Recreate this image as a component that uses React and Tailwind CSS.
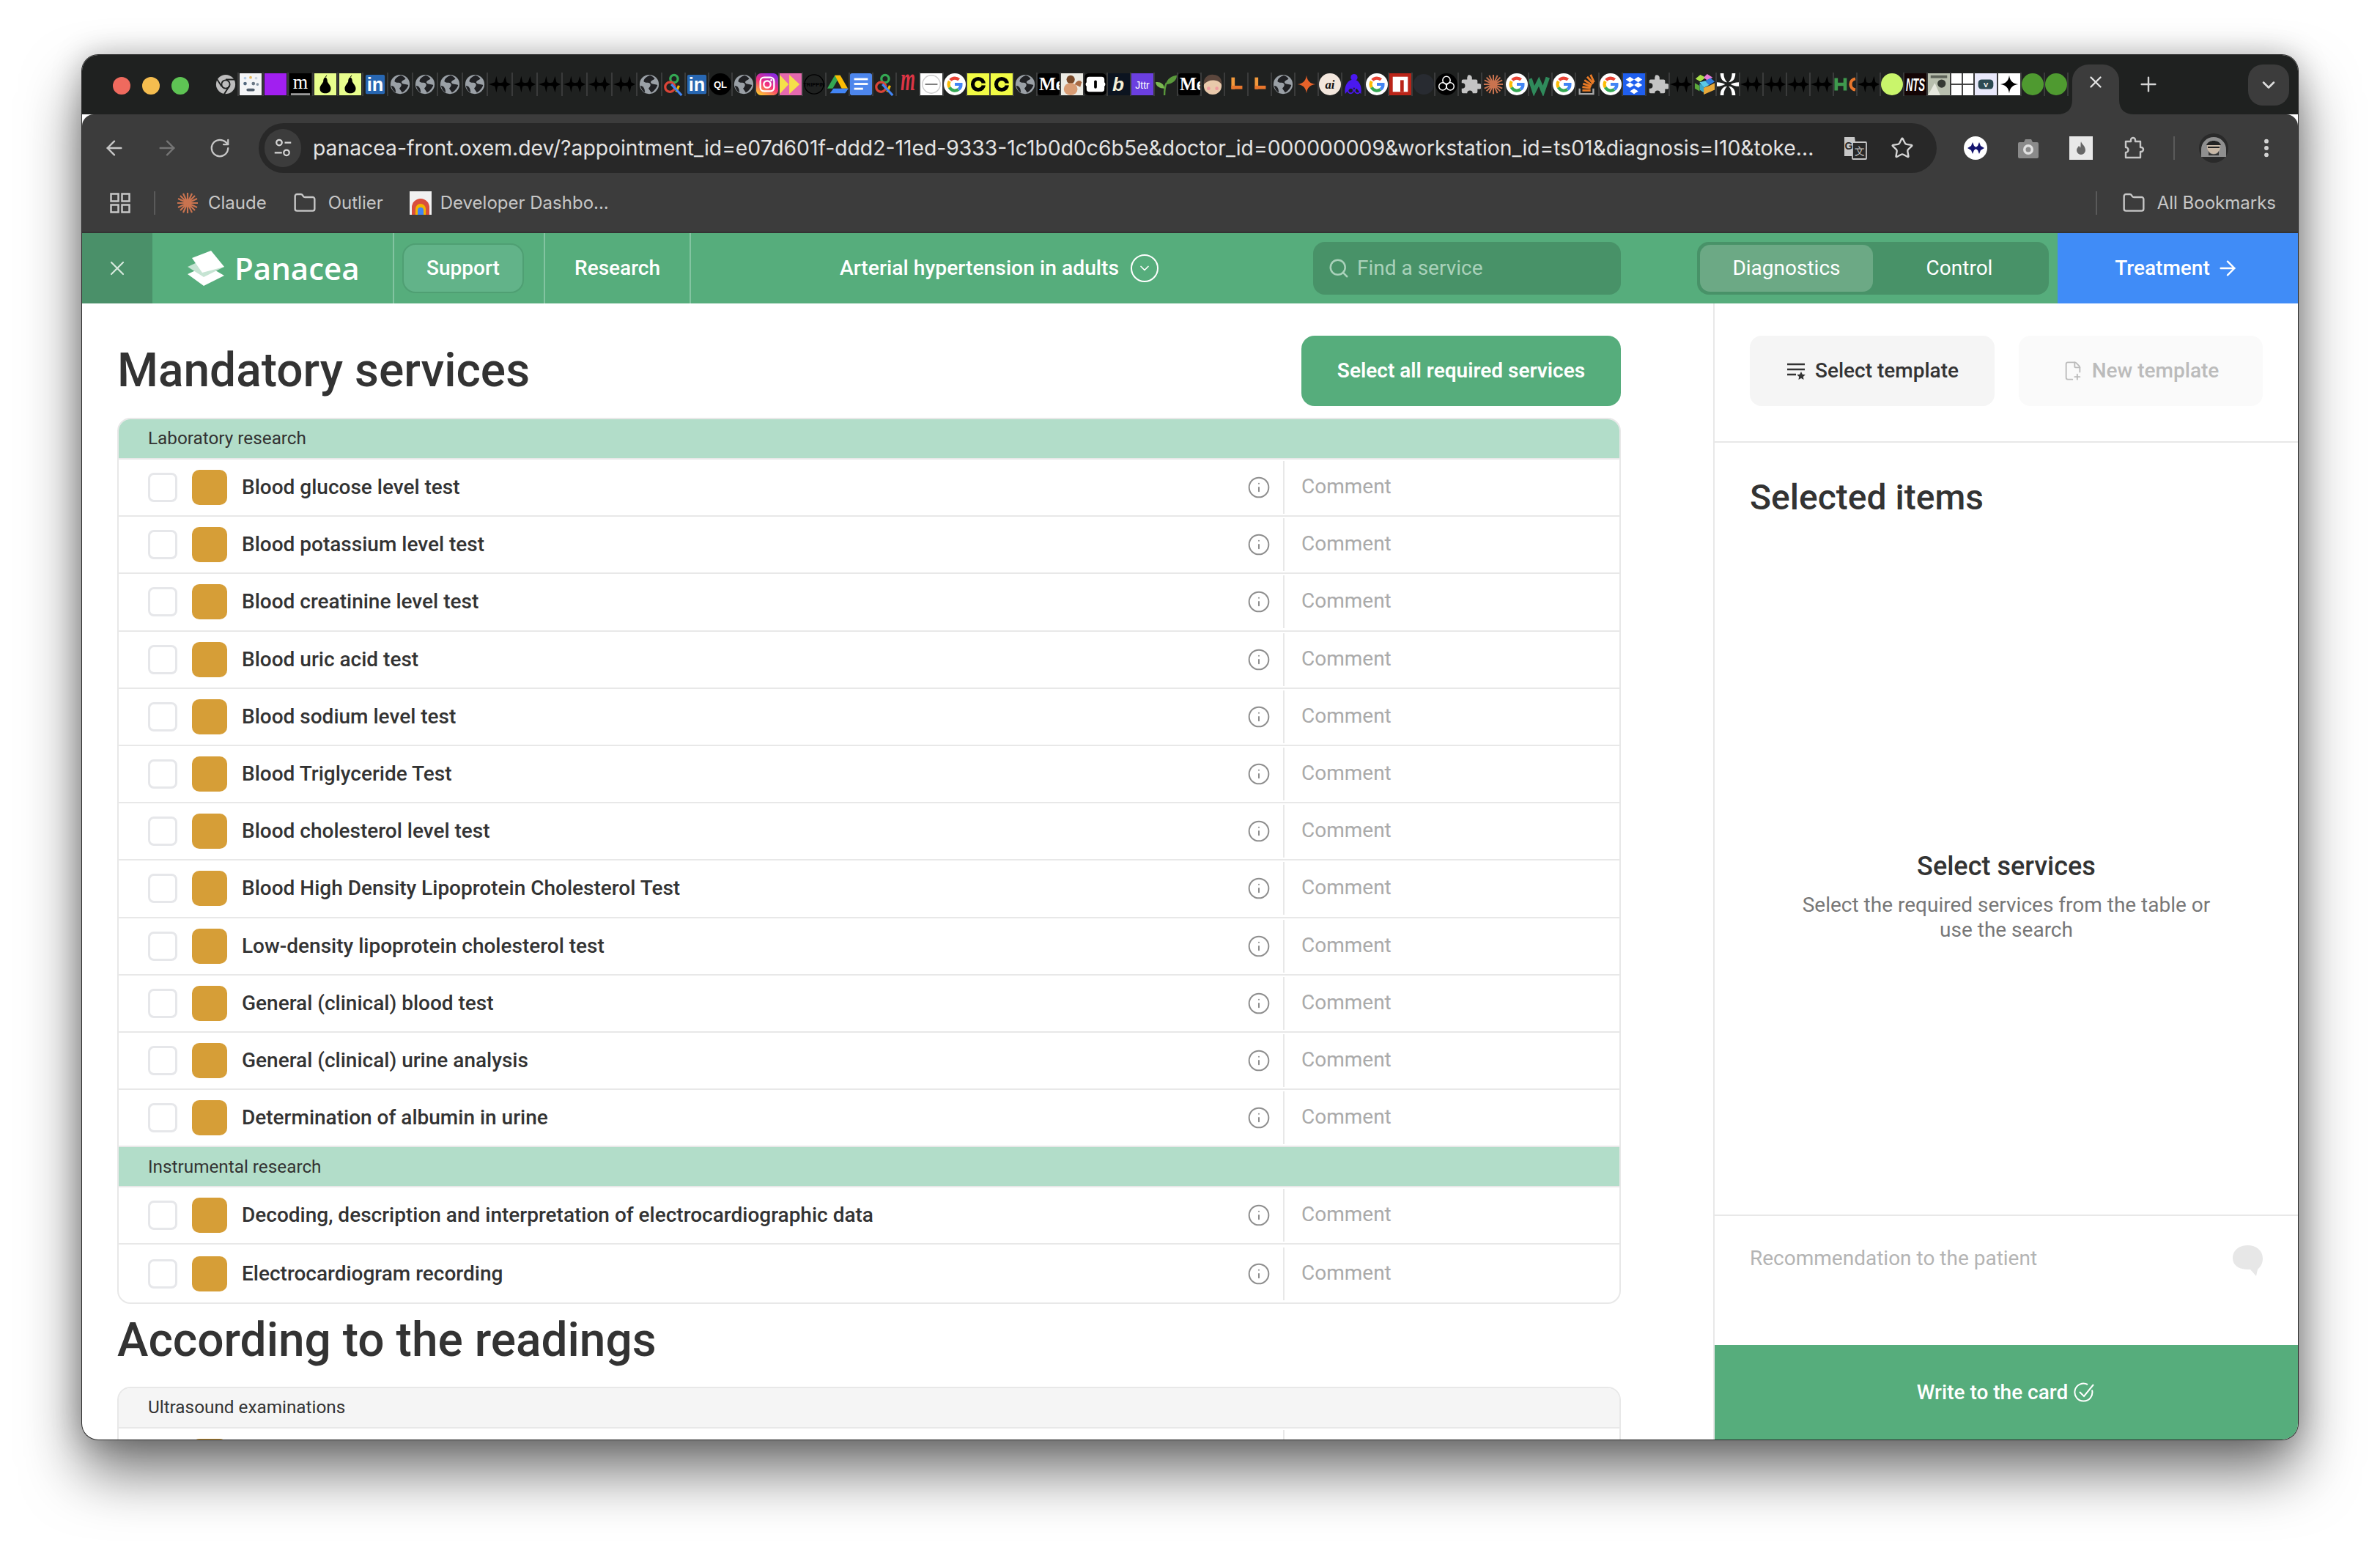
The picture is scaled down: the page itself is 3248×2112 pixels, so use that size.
import React from 'react';
import { ArrowLeft, ArrowRight, RotateCw, Star, MoreVertical, Plus, X, ChevronDown, Folder, Search, Info, FilePlus2 } from 'lucide-react';

const STAR4 = 'M16 3 C17 11 21 15 29 16 C21 17 17 21 16 29 C15 21 11 17 3 16 C11 15 15 11 16 3Z';

function GoogleG() {
  return (
    <>
      <circle cx="16" cy="16" r="16" fill="#fff" />
      <path d="M16 7a9 9 0 0 1 6 2.3" stroke="#ea4335" strokeWidth="4.5" fill="none" />
      <path d="M9.5 10a9 9 0 0 1 6.5-3" stroke="#ea4335" strokeWidth="4.5" fill="none" />
      <path d="M8.3 11.5a9 9 0 0 0 0 9" stroke="#fbbc05" strokeWidth="4.5" fill="none" />
      <path d="M8.3 20.5a9 9 0 0 0 13 3" stroke="#34a853" strokeWidth="4.5" fill="none" />
      <path d="M16 16h9a9 9 0 0 1-3.500 7.500" stroke="#4285f4" strokeWidth="4.5" fill="none" />
    </>
  );
}

function Globe() {
  return (
    <>
      <circle cx="16" cy="16" r="14" fill="#9aa0a6" />
      <path d="M17 3c-5 2-9 5-9 9 3 3 7 0 9 3 2 2 0 5-2 7l4 6c4-2 8-7 9-11-4-2-8 0-10-4 1-3 4-3 6-5-2-3-4-4-7-5Z" fill="#202124" />
      <path d="M3 18c3 0 5 2 6 5l1 5c-4-2-6-6-7-10Z" fill="#202124" />
    </>
  );
}

function Spiky() {
  return (
    <>
      <path d="M0 16 L9 13 L11 4 L13 13 L22 16 L13 19 L11 28 L9 19Z" fill="#000" />
      <path d="M10 16 L21 13 L24 4 L26 13 L32 16 L26 19 L24 28 L21 19Z" fill="#000" />
    </>
  );
}

function Rect({ fill }) {
  return <rect width="32" height="32" fill={fill} />;
}

const FAVS = {
  chrome: (
    <>
      <circle cx="16" cy="16" r="14" fill="#bdbdbd" />
      <circle cx="16" cy="16" r="7" fill="#1f2120" />
      <circle cx="16" cy="16" r="5" fill="#bdbdbd" />
      <path d="M16 9h13M10 19L3 8M21 19l-7 11" stroke="#1f2120" strokeWidth="2" />
    </>
  ),
  dots: (
    <>
      <Rect fill="#f4f5f7" />
      <circle cx="8" cy="7" r="2" fill="#b6cde6" />
      <circle cx="16" cy="6" r="2" fill="#e6b85c" />
      <circle cx="24" cy="7" r="2" fill="#c9d4e0" />
      <circle cx="8" cy="15" r="2.5" fill="#556a80" />
      <circle cx="20" cy="15" r="2.500" fill="#6a7784" />
      <circle cx="26" cy="16" r="2" fill="#8594a3" />
      <rect x="10" y="22" width="12" height="4" rx="2" fill="#4f5d6b" />
    </>
  ),
  purple: <Rect fill="#a11ff0" />,
  m: (
    <>
      <Rect fill="#000" />
      <text x="16" y="22" fontSize="28" fontFamily="Liberation Serif" fill="#fff" textAnchor="middle">m</text>
      <rect x="2" y="29" width="28" height="3" fill="#999" />
    </>
  ),
  pear: (
    <>
      <Rect fill="#e8fe8d" />
      <path d="M16 6c2 0 3 3 3 6 1 3 5 6 5 10 0 5-4 7-8 7s-8-2-8-7c0-4 4-7 5-10 0-3 1-6 3-6Z" fill="#000" />
      <path d="M16 6l2-3" stroke="#000" strokeWidth="1" />
    </>
  ),
  in: (
    <>
      <rect x="2" y="2" width="28" height="28" rx="2" fill="#2867b2" />
      <text x="16" y="26" fontSize="27" fontWeight="700" fontFamily="Liberation Sans" fill="#fff" textAnchor="middle">in</text>
    </>
  ),
  globe: <Globe />,
  x: <Spiky />,
  q: (
    <>
      <circle cx="17" cy="8" r="5.500" fill="none" stroke="#34a853" strokeWidth="3.500" />
      <circle cx="11" cy="20" r="7" fill="none" stroke="#db4437" strokeWidth="3.500" />
      <path d="M24 18l-4 9" stroke="#f4b400" strokeWidth="3.500" />
      <path d="M13 16l15 16" stroke="#4285f4" strokeWidth="3.500" />
    </>
  ),
  ql: (
    <>
      <circle cx="16" cy="16" r="16" fill="#000" />
      <text x="16" y="21" fontSize="14" fontWeight="700" fontFamily="Liberation Sans" fill="#fff" textAnchor="middle">QL</text>
    </>
  ),
  insta: (
    <>
      <defs>
        <linearGradient id="ig" x1="0.200" y1="1" x2="0.700" y2="0">
          <stop offset="0" stopColor="#fdc830" />
          <stop offset="0.5" stopColor="#f5307a" />
          <stop offset="1" stopColor="#8a2be2" />
        </linearGradient>
      </defs>
      <rect width="32" height="32" rx="7" fill="url(#ig)" />
      <rect x="6" y="6" width="20" height="20" rx="5.500" fill="none" stroke="#fff" strokeWidth="2.500" />
      <circle cx="16" cy="16" r="5" fill="none" stroke="#fff" strokeWidth="2.500" />
      <circle cx="22" cy="10" r="1.500" fill="#fff" />
    </>
  ),
  chev: (
    <>
      <Rect fill="#e569ae" />
      <path d="M0 2 L13 16 L0 30Z" fill="#f5e04a" />
      <path d="M14 2 L29 16 L14 30Z" fill="#f5e04a" />
    </>
  ),
  trip: (
    <>
      <circle cx="16" cy="16" r="14" fill="none" stroke="#000" strokeWidth="1.500" />
      <text x="16" y="19" fontSize="8" fontWeight="700" fontFamily="Liberation Sans" fill="#000" textAnchor="middle">TRIPPIN</text>
    </>
  ),
  drive: (
    <>
      <path d="M12 3h8L9 22H1Z" fill="#34a853" />
      <path d="M12 3h8l11 19h-9Z" fill="#fbbc05" />
      <path d="M5 29l5-7h22l-5 7Z" fill="#4285f4" />
    </>
  ),
  docs: (
    <>
      <rect width="32" height="32" rx="3" fill="#4d86ec" />
      <rect x="6" y="7" width="20" height="3" fill="#fff" />
      <rect x="6" y="14" width="20" height="3" fill="#fff" />
      <rect x="6" y="21" width="13" height="3" fill="#fff" />
    </>
  ),
  mred: <text x="29" y="25" transform="scale(0.55 1)" fontSize="50" fontWeight="700" fontStyle="italic" fontFamily="Liberation Serif" fill="#dc3545" textAnchor="middle">m</text>,
  circ: (
    <>
      <Rect fill="#fff" />
      <circle cx="16" cy="16" r="13" fill="none" stroke="#ccc" strokeWidth="1.500" />
      <rect x="7" y="15" width="18" height="2" fill="#777" />
    </>
  ),
  g: <GoogleG />,
  c: (
    <>
      <Rect fill="#f1fb45" />
      <circle cx="16" cy="16" r="8" fill="none" stroke="#000" strokeWidth="5.500" />
      <rect x="21" y="14.500" width="7" height="3" fill="#f1fb45" />
    </>
  ),
  me: (
    <>
      <rect width="32" height="32" rx="4" fill="#000" />
      <text x="2" y="25" fontSize="26" fontWeight="700" fontFamily="Liberation Serif" fill="#fff">Me</text>
    </>
  ),
  muscle: (
    <>
      <Rect fill="#ecebe4" />
      <circle cx="14" cy="9" r="6" fill="#7a4a2a" />
      <ellipse cx="14" cy="23" rx="10" ry="9" fill="#d89c74" />
      <path d="M20 16c3-6 8-7 10-3l-2 7Z" fill="#a86a44" />
    </>
  ),
  blob: (
    <>
      <rect width="32" height="32" rx="6" fill="#000" />
      <path d="M7 5h18a4 4 0 0 1 4 4v4a4 4 0 0 1 0 6v4a4 4 0 0 1-4 4H7a4 4 0 0 1-4-4v-4a4 4 0 0 1 0-6V9a4 4 0 0 1 4-4Z" fill="#fff" />
      <rect x="14" y="10" width="4" height="12" rx="2" fill="#000" />
    </>
  ),
  b: (
    <>
      <Rect fill="#0c1420" />
      <text x="15" y="26" fontSize="28" fontWeight="700" fontStyle="italic" fontFamily="Liberation Sans" fill="#f6f1d8" textAnchor="middle">b</text>
    </>
  ),
  jttr: (
    <>
      <Rect fill="#6b3fe0" />
      <text x="16" y="22" fontSize="15" fontFamily="Liberation Sans" fill="#fff" textAnchor="middle">Jttr</text>
    </>
  ),
  sprout: (
    <>
      <path d="M14 32c0-8 1-14 3-18" stroke="#5a9a3c" strokeWidth="2.500" fill="none" />
      <path d="M16 16C18 8 24 4 32 3c0 7-6 13-16 13Z" fill="#5a9a3c" />
      <path d="M14 22C13 15 8 12 1 13c1 6 6 9 13 9Z" fill="#7ab850" />
    </>
  ),
  face: (
    <>
      <circle cx="16" cy="18" r="13" fill="#e9c9ab" />
      <path d="M3 16C2 6 10 1 17 2c8 0 13 6 12 14-4-5-8-6-13-6-5 0-9 2-13 6Z" fill="#5b463c" />
      <circle cx="10" cy="22" r="2.500" fill="#ef9aa0" />
      <circle cx="22" cy="22" r="2.500" fill="#ef9aa0" />
    </>
  ),
  l: (
    <>
      <rect x="9" y="6" width="5" height="17" fill="#f39a3c" />
      <rect x="9" y="18" width="16" height="5" fill="#e8762c" />
    </>
  ),
  star: <path d={STAR4} fill="#e8622a" />,
  ai: (
    <>
      <circle cx="16" cy="16" r="16" fill="#f3e7dd" />
      <text x="16" y="22" fontSize="18" fontWeight="700" fontStyle="italic" fontFamily="Liberation Serif" fill="#111" textAnchor="middle">ai</text>
    </>
  ),
  hood: (
    <>
      <circle cx="17" cy="6" r="5" fill="#4a18f0" />
      <path d="M4 30C2 18 8 9 16 9c8 0 13 9 11 21-6-7-5-9-11-9-5 0-7 3-12 9Z" fill="#4a18f0" />
      <circle cx="12" cy="25" r="4" fill="none" stroke="#4a18f0" strokeWidth="2" />
      <circle cx="22" cy="25" r="4" fill="none" stroke="#4a18f0" strokeWidth="2" />
    </>
  ),
  npm: (
    <>
      <Rect fill="#ba2418" />
      <rect x="5" y="5" width="22" height="22" fill="#fff" />
      <rect x="16" y="10" width="5" height="17" fill="#ba2418" />
    </>
  ),
  gh: <circle cx="16" cy="16" r="15" fill="#282b31" />,
  openai: (
    <>
      <circle cx="16" cy="16" r="16" fill="#000" />
      <circle cx="16" cy="10" r="5.500" fill="none" stroke="#fff" strokeWidth="1.600" />
      <circle cx="10.500" cy="19" r="5.500" fill="none" stroke="#fff" strokeWidth="1.600" />
      <circle cx="21.500" cy="19" r="5.500" fill="none" stroke="#fff" strokeWidth="1.600" />
    </>
  ),
  puzzle: <path d="M13 3a4 4 0 0 1 6 3l0 3h6a2 2 0 0 1 2 2v4h2a4 4 0 0 1 0 8h-2v4a2 2 0 0 1-2 2h-5a4 4 0 0 0-8 0H6a2 2 0 0 1-2-2v-5h1a4 4 0 0 0 0-8H4v-3a2 2 0 0 1 2-2h6V6Z" fill="#c4c4c4" />,
  claude: <path d="M16 2v28M2 16h28M6 6l20 20M26 6L6 26M10 3l12 26M22 3L10 29M3 10l26 12M29 10L3 22" stroke="#c9734f" strokeWidth="2.200" />,
  w: <path d="M1 8l6 18 7-14 6 14 7-20" fill="none" stroke="#2f8a5b" strokeWidth="6" />,
  so: (
    <>
      <path d="M5 22v8h20v-8" fill="none" stroke="#a8a8a8" strokeWidth="2.500" />
      <path d="M9 25h12M9 20l12 1.500M10 15l12 4M12 10l11 7M16 5l9 10M21 2l5 11" stroke="#e97b26" strokeWidth="3" />
    </>
  ),
  dropbox: (
    <>
      <Rect fill="#1f5fee" />
      <path d="M10 5l6 4-6 4-6-4ZM22 5l6 4-6 4-6-4ZM10 13l6 4-6 4-6-4ZM22 13l6 4-6 4-6-4ZM16 22l6 4-6 4-6-4Z" fill="#fff" />
    </>
  ),
  cube: (
    <>
      <path d="M10 2l8 4-8 6-7-4Z" fill="#a8e04a" />
      <path d="M20 1l8 5-8 4-5-4Z" fill="#e87bd8" />
      <path d="M17 11l8-4 6 5-8 5Z" fill="#2f7fe0" />
      <path d="M9 13l8-2 6 6-8 4Z" fill="#5cc9e8" />
      <path d="M9 15v9l6 4v-9Z" fill="#3fa8c8" />
      <path d="M15 21l8-3 8-4v10l-16 7Z" fill="#e8a93a" />
      <path d="M2 14l7 4v8l-7-4Z" fill="#5aa83a" />
    </>
  ),
  spikes: (
    <>
      <Rect fill="#1f2120" />
      <path d="M5 0h5c0 6 2 10 5 13-6 0-10-5-10-13ZM27 0h-5c0 6-2 10-5 13 6 0 10-5 10-13ZM5 32h5c0-6 2-10 5-13-6 0-10 5-10 13ZM27 32h-5c0-6-2-10-5-13 6 0 10 5 10 13ZM0 13c5 0 8 1 12 3-4 2-7 3-12 3ZM32 13c-5 0-8 1-12 3 4 2 7 3 12 3Z" fill="#fff" />
    </>
  ),
  hc: (
    <>
      <path d="M3 7v18M16 7v18M3 16h13" stroke="#3f9a4e" strokeWidth="5" />
      <path d="M31 8a8 8 0 0 0-7 8 8 8 0 0 0 7 8" fill="none" stroke="#e8762c" strokeWidth="4.500" />
    </>
  ),
  lime: <circle cx="16" cy="16" r="16" fill="#c9f56b" />,
  nts: (
    <>
      <Rect fill="#140505" />
      <text x="16" y="26" fontSize="26" fontStyle="italic" fontWeight="700" fontFamily="Liberation Sans" fill="#fff" textAnchor="middle" textLength="28" lengthAdjust="spacingAndGlyphs">NTS</text>
    </>
  ),
  pic: (
    <>
      <Rect fill="#b8bfae" />
      <rect x="4" y="3" width="24" height="4" fill="#5d6358" />
      <circle cx="20" cy="15" r="6" fill="#353a34" />
      <path d="M0 32L10 14l8 18Z" fill="#e6e8de" />
    </>
  ),
  grid: (
    <>
      <Rect fill="#fff" />
      <rect x="15" width="2" height="32" fill="#3a3a3a" />
      <rect y="15" width="32" height="2" fill="#3a3a3a" />
    </>
  ),
  v: (
    <>
      <Rect fill="#e9e9fb" />
      <rect x="5" y="9" width="22" height="14" rx="5" fill="#2c4a52" />
      <text x="16" y="20" fontSize="10" fontWeight="700" fontFamily="Liberation Sans" fill="#fff" textAnchor="middle">V</text>
    </>
  ),
  wstar: (
    <>
      <Rect fill="#fff" />
      <path d={STAR4} fill="#000" />
    </>
  ),
  green: <circle cx="16" cy="16" r="16" fill="#4f9a30" />,
};

const WIDE_TABS = ['chrome', 'dots', 'purple', 'm', 'pear', 'pear', 'in', 'globe', 'globe', 'globe', 'globe', 'x', 'x', 'x', 'x', 'x', 'x', 'globe'];
const NARROW_TABS = [
  'q', 'in', 'ql', 'globe', 'insta', 'chev', 'trip', 'drive', 'docs', 'q', 'mred', 'circ', 'g', 'c', 'c', 'globe', 'me', 'muscle', 'blob', 'b',
  'jttr', 'sprout', 'me', 'face', 'l', 'l', 'globe', 'star', 'ai', 'hood', 'g', 'npm', 'gh', 'openai', 'puzzle', 'claude', 'g', 'w', 'g', 'so',
  'g', 'dropbox', 'puzzle', 'x', 'cube', 'spikes', 'x', 'x', 'x', 'x', 'hc', 'x', 'lime', 'nts', 'pic', 'grid', 'v', 'wstar', 'green', 'green',
];

function Fav({ name, className }) {
  return (
    <div className={`flex h-8 items-center justify-center overflow-hidden border-r-[2px] border-[#3a3b3b] ${className}`}>
      <svg className="h-8 w-[30px] shrink-0" viewBox="0 0 32 32">{FAVS[name]}</svg>
    </div>
  );
}

function TabStrip() {
  return (
    <div className="flex h-[81px] bg-[#1f2120]">
      <div className="mt-[30px] flex h-6 w-[180px] gap-4 pl-[42px]">
        <span className="h-6 w-6 shrink-0 rounded-full bg-[#ef6a5e]" />
        <span className="h-6 w-6 shrink-0 rounded-full bg-[#f5bd4f]" />
        <span className="h-6 w-6 shrink-0 rounded-full bg-[#5ec454]" />
      </div>
      <div className="mt-6 flex h-8 w-[2531px] items-center">
        {WIDE_TABS.map((name, i) => (
          <Fav key={i} name={name} className="w-[34px] shrink-0" />
        ))}
        {NARROW_TABS.map((name, i) => (
          <Fav key={i} name={name} className="min-w-0 flex-1" />
        ))}
      </div>
      {/* Active tab with the little flares at its foot */}
      <div className="relative ml-[5px] mt-[13px] flex h-[68px] w-16 justify-center rounded-t-[22px] bg-[#3c3c3c] pt-[11px]">
        <X className="h-[26px] w-[26px] text-[#e3e3e3]" strokeWidth={2.2} />
        <svg className="absolute bottom-0 right-full h-5 w-5" viewBox="0 0 20 20"><path d="M20 0v20H0c12 0 20-6 20-20Z" fill="#3c3c3c" /></svg>
        <svg className="absolute bottom-0 left-full h-5 w-5" viewBox="0 0 20 20"><path d="M0 0v20h20C8 20 0 14 0 0Z" fill="#3c3c3c" /></svg>
      </div>
      <div className="ml-6 mt-[24px] flex h-8 w-8 items-center justify-center">
        <Plus className="h-8 w-8 text-[#d5d5d5]" strokeWidth={1.8} />
      </div>
      <div className="ml-[120px] mt-[13px] flex h-14 w-14 items-center justify-center rounded-[20px] bg-[#3c3c3c]">
        <ChevronDown className="h-7 w-7 text-[#dcdcdc]" strokeWidth={2.2} />
      </div>
    </div>
  );
}

function ToolCell({ children }) {
  return <div className="flex h-[68px] w-[72px] shrink-0 items-center justify-center">{children}</div>;
}

function Toolbar() {
  return (
    <div className="flex h-[82px] rounded-t-[16px] bg-[#3c3c3c] pl-2 pt-3">
      <ToolCell><ArrowLeft className="h-8 w-8 text-[#c7c7c7]" strokeWidth={1.8} /></ToolCell>
      <ToolCell><ArrowRight className="h-8 w-8 text-[#757575]" strokeWidth={1.8} /></ToolCell>
      <ToolCell><RotateCw className="h-[30px] w-[30px] text-[#c7c7c7]" strokeWidth={1.8} /></ToolCell>
      <div className="ml-[17px] flex h-[68px] w-[2290px] items-center rounded-full bg-[#282828] pl-2 pr-[15px]">
        <div className="flex h-[52px] w-[50px] shrink-0 items-center justify-center rounded-full bg-[#3c3c3c]">
          <svg className="h-[30px] w-[30px] text-[#d5d5d5]" viewBox="0 0 24 24" fill="none" stroke="currentColor" strokeWidth="1.800">
            <circle cx="8" cy="6" r="3" />
            <path d="M14 6h7M3 17h8" />
            <circle cx="16" cy="17" r="3" />
          </svg>
        </div>
        <span className="ml-4 min-w-0 flex-1 whitespace-nowrap font-['Inter',sans-serif] text-[28.3px] text-[#e3e3e3]">
          panacea-front.oxem.dev/?appointment_id=e07d601f-ddd2-11ed-9333-1c1b0d0c6b5e&amp;doctor_id=000000009&amp;workstation_id=ts01&amp;diagnosis=I10&amp;toke...
        </span>
        <div className="flex w-16 shrink-0 justify-center">
          <svg className="h-9 w-9" viewBox="0 0 36 36">
            <path d="M3 3h14l4 26H3Z" fill="#c7c7c7" />
            <rect x="14" y="10" width="19" height="23" rx="1" fill="#282828" stroke="#c7c7c7" strokeWidth="1.800" />
            <text x="9" y="20" fontSize="14" fontWeight="700" fontFamily="Liberation Sans" fill="#282828" textAnchor="middle">G</text>
            <text x="24" y="27" fontSize="14" fontFamily="Liberation Sans" fill="#c7c7c7" textAnchor="middle">文</text>
          </svg>
        </div>
        <div className="flex w-16 shrink-0 justify-center">
          <Star className="h-8 w-8 text-[#d5d5d5]" strokeWidth={1.8} />
        </div>
      </div>
      <div className="ml-[17px] flex">
        <ToolCell>
          <svg className="h-8 w-8" viewBox="0 0 32 32">
            <circle cx="16" cy="16" r="16" fill="#fff" />
            <path d="M5 16l5-3 2-5 2 5 4 3-4 3-2 5-2-5ZM15 16l4-3 2-5 2 5 5 3-5 3-2 5-2-5Z" fill="#14146e" />
          </svg>
        </ToolCell>
        <ToolCell>
          <svg className="h-8 w-8" viewBox="0 0 32 32">
            <path d="M4 8h6l2-4h8l2 4h6a2 2 0 0 1 2 2v18a2 2 0 0 1-2 2H4a2 2 0 0 1-2-2V10a2 2 0 0 1 2-2Z" fill="#8a8a8a" />
            <circle cx="16" cy="18" r="7" fill="#e0e0e0" />
            <circle cx="16" cy="18" r="3.500" fill="#8a8a8a" />
          </svg>
        </ToolCell>
        <ToolCell>
          <div className="flex h-8 w-8 items-center justify-center bg-[#e8e8e8]">
            <svg className="h-5 w-5" viewBox="0 0 20 20"><path d="M10 1c1 4 6 6 6 12a6 6 0 0 1-12 0c0-3 2-4 3-6 1 1 2 2 2 3 1-3 0-6 1-9Z" fill="#666" /></svg>
          </div>
        </ToolCell>
        <ToolCell>
          <svg className="h-8 w-8" viewBox="0 0 32 32" fill="none" stroke="#c7c7c7" strokeWidth="2.400" strokeLinejoin="round">
            <path d="M5 7h7V5a3 3 0 0 1 6 0v2h7v8h1a3 3 0 0 1 0 6h-1v8H5v-7a3 3 0 0 0 0-7Z" />
          </svg>
        </ToolCell>
      </div>
      <div className="ml-[18px] mt-[18px] h-8 w-[2px] bg-[#5a5a5a]" />
      <div className="ml-[17px]">
        <ToolCell>
          <svg className="h-[40px] w-[40px]" viewBox="0 0 40 40">
            <circle cx="20" cy="20" r="20" fill="#2a2a2a" />
            <path d="M3 22a17 17 0 0 1 34 0v10H3Z" fill="#8f8f8f" />
            <circle cx="20" cy="19" r="9" fill="#c9b8a6" />
            <path d="M10 16c3-8 17-8 20 0Z" fill="#222" />
            <path d="M12 19h16" stroke="#222" strokeWidth="2" />
            <path d="M13 24c2 6 12 6 14 0v6H13Z" fill="#333" />
          </svg>
        </ToolCell>
      </div>
      <ToolCell><MoreVertical className="h-8 w-8 text-[#d5d5d5]" strokeWidth={2.4} /></ToolCell>
    </div>
  );
}

function Bookmarks() {
  return (
    <div className="flex h-[80px] items-center border-b-2 border-[#333] bg-[#3c3c3c] font-['Inter',sans-serif] text-[24px] text-[#c7c7c7]">
      <svg className="ml-[38px] h-7 w-7 shrink-0" viewBox="0 0 28 28" fill="none" stroke="#c7c7c7" strokeWidth="2.500">
        <rect x="1.500" y="1.500" width="10" height="10" />
        <rect x="16.500" y="1.500" width="10" height="10" />
        <rect x="1.500" y="16.500" width="10" height="10" />
        <rect x="16.500" y="16.500" width="10" height="10" />
      </svg>
      <span className="ml-[32px] h-8 w-[2px] bg-[#5a5a5a]" />
      <svg className="ml-[28px] h-8 w-8 shrink-0" viewBox="0 0 32 32">{FAVS.claude}</svg>
      <span className="ml-3">Claude</span>
      <Folder className="ml-[36px] h-8 w-8 text-[#c7c7c7]" strokeWidth={1.8} />
      <span className="ml-4">Outlier</span>
      <svg className="ml-9 h-8 w-[30px] shrink-0" viewBox="0 0 30 32">
        <rect width="30" height="32" fill="#f1f1f1" />
        <path d="M3 32V22a12 12 0 0 1 24 0v10Z" fill="#d94f3d" />
        <path d="M8 32V24a7 7 0 0 1 14 0v8Z" fill="#f4b400" />
        <path d="M11 32v-6a4 4 0 0 1 8 0v6Z" fill="#4285f4" />
      </svg>
      <span className="ml-3 flex-1">Developer Dashbo...</span>
      <span className="h-8 w-[2px] bg-[#5a5a5a]" />
      <Folder className="ml-[34px] h-8 w-8 text-[#c7c7c7]" strokeWidth={1.8} />
      <span className="ml-4 mr-[30px]">All Bookmarks</span>
    </div>
  );
}

function AppHeader() {
  return (
    <div className="flex h-24 bg-[#56ad7c] text-[28px] font-medium text-white">
      <div className="flex w-24 items-center justify-center bg-[#4a9069]">
        <X className="h-8 w-8 text-[#d7e9de]" strokeWidth={1.6} />
      </div>
      <div className="flex w-[330px] items-center gap-[12px] border-r-2 border-[#83c4a1] pl-[46px]">
        <svg className="h-[52px] w-[54px] shrink-0" viewBox="0 0 54 52">
          <path d="M2 34l26-12 24 14-28 14Z" fill="#fff" />
          <path d="M2 24l26-12 24 12-28 14Z" fill="#c6e4d3" />
          <path d="M8 12L34 2l18 22-30 8Z" fill="#fff" />
        </svg>
        <span className="font-['Open_Sans',sans-serif] text-[42px] font-semibold leading-none">Panacea</span>
      </div>
      <div className="flex w-[206px] items-center border-r-2 border-[#83c4a1] pl-[11px]">
        <div className="flex h-[68px] w-[166px] items-center justify-center rounded-[18px] border-2 border-[#4f9f73] bg-[#62b389]">Support</div>
      </div>
      <div className="flex w-[199px] items-center justify-center border-r-2 border-[#83c4a1]">Research</div>
      <div className="flex w-[849px] items-center justify-center gap-4 pr-2">
        <span className="text-[28.3px]">Arterial hypertension in adults</span>
        <span className="flex h-[38px] w-[38px] items-center justify-center rounded-full border-2 border-white">
          <ChevronDown className="h-5 w-5" strokeWidth={2} />
        </span>
      </div>
      <div className="mt-3 flex h-[72px] w-[420px] items-center rounded-[16px] bg-[#489268] pl-[20px] font-normal text-[#a9d1ba]">
        <Search className="h-[30px] w-[30px]" strokeWidth={2} />
        <span className="ml-[10px]">Find a service</span>
      </div>
      <div className="ml-[104px] mt-3 flex h-[72px] w-[480px] items-center rounded-[16px] bg-[#489268] px-1 font-normal">
        <div className="flex h-16 w-[236px] items-center justify-center rounded-[14px] bg-[#6ca985]">Diagnostics</div>
        <div className="flex flex-1 items-center justify-center">Control</div>
      </div>
      <div className="ml-3 flex w-[328px] items-center justify-center gap-2 bg-[#408cf7] pr-[2px]">
        <span>Treatment</span>
        <ArrowRight className="h-8 w-8" strokeWidth={1.8} />
      </div>
    </div>
  );
}

function ServiceRow({ name, last }) {
  return (
    <div className={`flex h-[78.2px] items-center ${last ? '' : 'border-b-2 border-[#e8e8e8]'}`}>
      <span className="ml-10 h-10 w-10 shrink-0 rounded-lg border-[3px] border-[#e6e7ea] bg-white" />
      <span className="ml-5 h-12 w-12 shrink-0 rounded-[10px] bg-[#d69e37]" />
      <span className="ml-5 flex-1 text-[28px] font-medium text-[#333]">{name}</span>
      <Info className="mr-[17px] h-8 w-8 text-[#8e8e8e]" strokeWidth={1.5} />
      <div className="flex h-[72px] w-[459px] items-center border-l-2 border-[#e8e8e8] pb-[2px] pl-[23px] text-[28px] text-[#aaa]">Comment</div>
    </div>
  );
}

function SectionHead({ title, muted }) {
  return (
    <div className={`flex h-[55px] items-center border-b-2 border-[#e8e8e8] pl-10 text-[24.3px] font-normal text-[#333] ${muted ? 'bg-[#f5f5f5]' : 'bg-[#b2ddc9]'}`}>
      {title}
    </div>
  );
}

const LAB = [
  'Blood glucose level test',
  'Blood potassium level test',
  'Blood creatinine level test',
  'Blood uric acid test',
  'Blood sodium level test',
  'Blood Triglyceride Test',
  'Blood cholesterol level test',
  'Blood High Density Lipoprotein Cholesterol Test',
  'Low-density lipoprotein cholesterol test',
  'General (clinical) blood test',
  'General (clinical) urine analysis',
  'Determination of albumin in urine',
];

const INSTRUMENTAL = [
  'Decoding, description and interpretation of electrocardiographic data',
  'Electrocardiogram recording',
];

function LeftColumn() {
  return (
    <div className="h-full w-[2228px] shrink-0 overflow-hidden border-r-2 border-[#e8e8e8] pl-12 pr-[126px]">
      <div className="mt-11 flex h-24 items-center justify-between">
        <h1 className="text-[64px] font-medium leading-none text-[#333]">Mandatory services</h1>
        <button className="flex h-24 w-[436px] items-center justify-center rounded-[18px] bg-[#56ad7c] text-[28px] font-semibold text-white">
          Select all required services
        </button>
      </div>
      <div className="mt-4 overflow-hidden rounded-[18px] border-2 border-[#e8e8e8]">
        <SectionHead title="Laboratory research" />
        {LAB.map((name) => (
          <ServiceRow key={name} name={name} />
        ))}
        <SectionHead title="Instrumental research" />
        {INSTRUMENTAL.map((name, i) => (
          <ServiceRow key={name} name={name} last={i === INSTRUMENTAL.length - 1} />
        ))}
      </div>
      <h2 className="mt-[2px] text-[64px] font-medium leading-[96px] text-[#333]">According to the readings</h2>
      <div className="mt-[15px] overflow-hidden rounded-[18px] border-2 border-[#e8e8e8]">
        <SectionHead title="Ultrasound examinations" muted />
        <ServiceRow name="" />
      </div>
    </div>
  );
}

function RightColumn() {
  return (
    <div className="flex h-full flex-1 flex-col">
      <div className="flex h-[190px] shrink-0 items-start gap-[33px] border-b-2 border-[#e8e8e8] pl-[48px] pt-11 text-[28px] font-medium">
        <button className="flex h-24 w-[334px] items-center justify-center gap-3 rounded-[16px] bg-[#f5f5f5] text-[#333]">
          <svg className="h-7 w-7" viewBox="0 0 28 28">
            <path d="M2 5h24M2 12h24M2 19h12" stroke="#333" strokeWidth="2.600" />
            <path d="M21 15l1.800 3.800 4 .5-3 2.800.8 4-3.600-2-3.600 2 .8-4-3-2.800 4-.5Z" fill="#333" />
          </svg>
          Select template
        </button>
        <button className="flex h-24 w-[333px] items-center justify-center gap-3 rounded-[16px] bg-[#fafafa] text-[#bbb]">
          <FilePlus2 className="h-7 w-7" strokeWidth={1.6} />
          New template
        </button>
      </div>
      <div className="flex min-h-0 flex-1 flex-col border-b-2 border-[#e8e8e8] px-12 pt-[43px]">
        <h2 className="text-[48px] font-medium leading-[64px] text-[#333]">Selected items</h2>
        <div className="mx-auto mt-[447px] flex w-[580px] flex-col items-center text-center">
          <div className="text-[36px] font-medium leading-[48px] text-[#333]">Select services</div>
          <p className="mt-3 text-[28px] leading-[34px] text-[#777]">
            Select the required services from the table or use the search
          </p>
        </div>
      </div>
      <div className="flex h-[176px] shrink-0 items-start justify-between px-12 pt-[38px] text-[28px] text-[#b4b4b4]">
        <span className="mt-[-1px]">Recommendation to the patient</span>
        <svg className="mt-[2px] h-[42px] w-[41px]" viewBox="0 0 41 42">
          <path d="M20.500 0C32 0 41 7 41 18c0 8-4 12-7 15l-2 9-8-9h-3.500C9 33 0 28 0 17 0 7 9 0 20.500 0Z" fill="#e7e7e7" />
        </svg>
      </div>
      <div className="flex h-[129px] shrink-0 items-center justify-center gap-2 bg-[#56ad7c] pr-[2px] text-[28px] font-medium text-white">
        Write to the card
        <svg className="h-[28px] w-[28px]" viewBox="0 0 28 28" fill="none" stroke="#fff" strokeWidth="2">
          <path d="M25 10.500A12 12 0 1 1 19 3" />
          <path d="M8 13l6 6L27 3" />
        </svg>
      </div>
    </div>
  );
}

export default function App() {
  return (
    <div className="h-[2112px] w-[3248px] overflow-hidden bg-white pl-[112px] pt-[75px] font-['Roboto',sans-serif]">
      <div className="flex h-[1889px] w-[3024px] flex-col overflow-hidden rounded-[22px] bg-white shadow-[0_0_0_1px_#2a2a2a,0_44px_80px_rgba(0,0,0,0.55),0_0_40px_rgba(0,0,0,0.25)]">
        <TabStrip />
        <Toolbar />
        <Bookmarks />
        <AppHeader />
        <div className="flex min-h-0 flex-1">
          <LeftColumn />
          <RightColumn />
        </div>
      </div>
    </div>
  );
}
